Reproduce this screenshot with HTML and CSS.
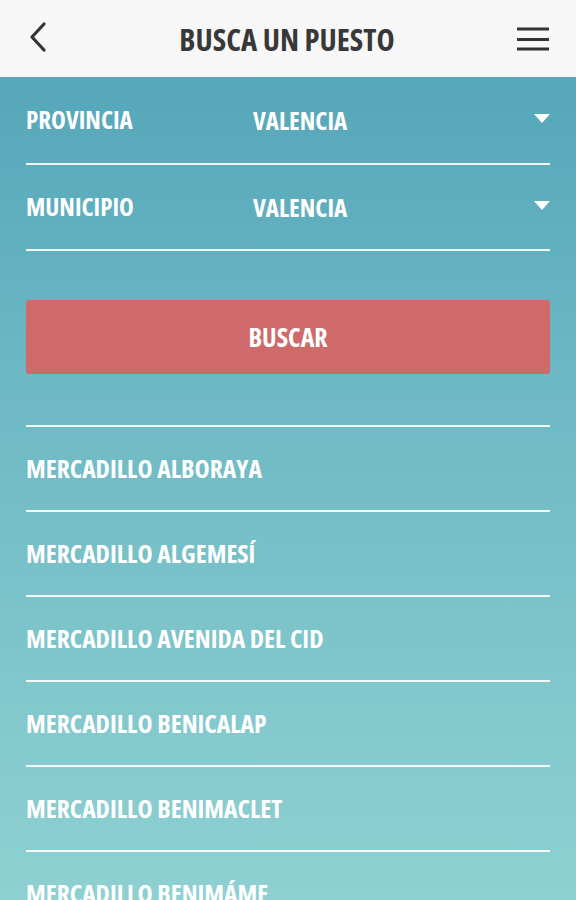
FILE: index.html
```html
<!DOCTYPE html>
<html lang="es">
<head>
<meta charset="utf-8">
<title>Busca un puesto</title>
<link rel="stylesheet" href="styles.css">
</head>
<body>
<div class="app">
  <header class="topbar">
    <svg class="icon back" width="24" height="34" viewBox="0 0 24 34"><polyline points="16,4 4,17 16,30" fill="none" stroke="#333" stroke-width="3.2" stroke-linecap="round" stroke-linejoin="round"/></svg>
    <h1 class="title">BUSCA UN PUESTO</h1>
    <svg class="icon menu" width="34" height="26" viewBox="0 0 34 26"><path d="M1 3H33M1 13.5H33M1 23H33" stroke="#333" stroke-width="3"/></svg>
  </header>
  <main class="content">
    <div class="select-row">
      <span class="label">PROVINCIA</span>
      <span class="value">VALENCIA</span>
      <svg class="caret" width="16" height="9" viewBox="0 0 16 9"><polygon points="0,0 16,0 8,9" fill="#fff"/></svg>
    </div>
    <div class="select-row">
      <span class="label">MUNICIPIO</span>
      <span class="value">VALENCIA</span>
      <svg class="caret" width="16" height="9" viewBox="0 0 16 9"><polygon points="0,0 16,0 8,9" fill="#fff"/></svg>
    </div>
    <button class="search-btn">BUSCAR</button>
    <ul class="market-list">
      <li class="market">MERCADILLO ALBORAYA</li>
      <li class="market">MERCADILLO ALGEMESÍ</li>
      <li class="market">MERCADILLO AVENIDA DEL CID</li>
      <li class="market">MERCADILLO BENICALAP</li>
      <li class="market">MERCADILLO BENIMACLET</li>
      <li class="market">MERCADILLO BENIMÁME</li>
    </ul>
  </main>
</div>
</body>
</html>
```
FILE: styles.css
```css
* { box-sizing: border-box; }
html, body { margin: 0; padding: 0; }
body {
  width: 576px;
  height: 900px;
  overflow: hidden;
  font-family: "Open Sans", "DejaVu Sans Condensed", sans-serif;
  font-stretch: 75%;
  font-weight: 700;
}
.app {
  height: 900px;
  display: flex;
  flex-direction: column;
  background: linear-gradient(180deg, #4fa2b7 0%, #6bb7c3 40%, #8fd1d2 100%);
}
.topbar {
  height: 77px;
  flex: none;
  background: #f7f7f7;
  display: flex;
  align-items: center;
  justify-content: space-between;
  padding: 0 26px 0 28px;
}
.title {
  margin: 0;
  font-size: 30.7px;
  line-height: 1;
  color: #383838;
  letter-spacing: 0;
  font-weight: 700;
  padding-top: 2px;
  margin-left: 6px;
}
.icon { display: block; }
.back { margin-top: -3px; }
.menu { margin-top: 0; }
.content {
  padding: 0 26px;
  color: #fff;
}
.select-row {
  height: 86px;
  display: flex;
  align-items: center;
  border-bottom: 2px solid rgba(255,255,255,0.9);
  font-size: 25px;
}
.select-row:first-child { height: 88px; }
.label { width: 227px; margin-top: -2px; }
.value { flex: 1; }
.caret { margin-top: -4px; }
.search-btn {
  display: block;
  width: 100%;
  height: 74px;
  margin: 49px 0 51px;
  border: none;
  border-radius: 3px;
  background: #cf6a6b;
  color: #fff;
  font-family: inherit;
  font-stretch: 75%;
  font-weight: 700;
  font-size: 26px;
  padding: 0;
}
.market-list {
  list-style: none;
  margin: 0;
  padding: 0;
  border-top: 2px solid rgba(255,255,255,0.9);
}
.market {
  height: 85px;
  display: flex;
  align-items: center;
  border-bottom: 2px solid rgba(255,255,255,0.9);
  font-size: 25.6px;
}
```
